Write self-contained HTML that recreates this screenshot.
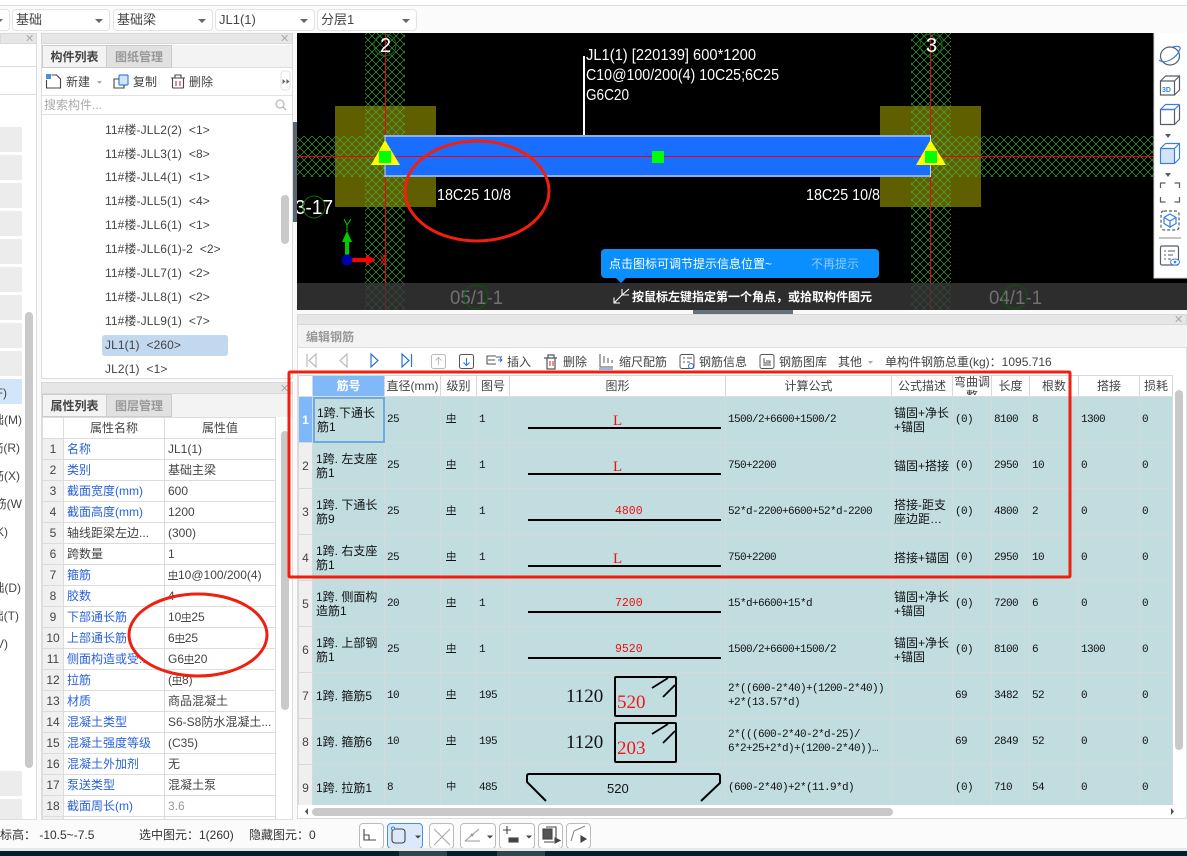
<!DOCTYPE html>
<html lang="zh"><head><meta charset="utf-8"><title>编辑钢筋</title>
<style>
*{box-sizing:border-box;margin:0;padding:0}
html,body{width:1187px;height:856px;overflow:hidden;background:#fafafa}
body{position:relative;font-family:"Liberation Sans","Noto Sans CJK SC",sans-serif;font-size:12px;color:#333}
.a{position:absolute;white-space:nowrap}
.sel{position:absolute;top:9px;height:22px;background:#fff;border:1px solid #e3e3e3;border-radius:4px;font-size:13px;line-height:20px;padding-left:3px;color:#444}
.sel:after{content:"";position:absolute;right:6px;top:9px;border:4px solid transparent;border-top:4px solid #666;border-bottom:0}
.hd{position:absolute;height:11px;background:#e6e6e6;border:1px solid #d8d8d8}
.x{position:absolute;font-size:11px;line-height:10px;color:#aaa}
.tab{position:absolute;height:23px;line-height:22px;text-align:center;font-size:12px;font-weight:bold;border:1px solid #ccc}
.tab.on{background:#f3f3f3;color:#444}.tab.off{background:#e1e1e1;color:#999}
.li{position:absolute;left:105px;line-height:16px;color:#444;font-size:12px;letter-spacing:.1px;white-space:pre}
.g{display:inline-block;border-bottom:1px solid currentColor;line-height:9px;font-size:10px;width:10px;text-align:center;font-family:"Noto Sans CJK SC",sans-serif}
.g2{border:0}
#pr{position:absolute;left:42px;top:417px;width:234px;height:402px;overflow:hidden}
#pr table{border-collapse:collapse;table-layout:fixed;width:234px}
#pr tr{height:21px}
#pr td{border:1px solid #dcdcdc;height:21px;padding:1px 3px 0;white-space:nowrap;overflow:hidden;font-size:12px;line-height:15px;color:#444;background:#fff}
#pr td:first-child{background:#f0f0f0;text-align:center;padding:1px 0 0}
#pr td.b{color:#2a62d8}
#rb{position:absolute;left:298px;top:375px;width:875px;height:430px;overflow:hidden}
#rb table{border-collapse:collapse;table-layout:fixed;width:874px}
#rb td{border:1px solid #d8d8d8;background:#c1dde0;height:46px;padding:0 2px;font-size:12px;line-height:14px;color:#111;overflow:hidden;vertical-align:middle}
#rb tr:first-child td{height:21px;background:#fff;text-align:center;color:#444;font-size:12px;border-bottom:1px solid #ddd}
#rb td.n{background:#efefef;text-align:center;padding:0;color:#444}
#rb td.m{font:11px/14px "Liberation Mono","Noto Sans CJK SC",monospace;letter-spacing:-.6px;padding-left:2px}
#rb td.t{padding-left:3px}
#rb .g{margin-left:3px}
.tl{position:absolute;top:354px;font-size:12px;line-height:16px;color:#444}
.side{position:absolute;left:0;width:22px;height:25px;background:#ececec}
.sd{position:absolute;font-size:12px;line-height:16px;white-space:nowrap;color:#444}
.st{position:absolute;top:827px;font-size:12px;line-height:16px;color:#333}
.bt{position:absolute;top:823px;height:26px;border:1px solid #bbb;border-radius:4px;background:#fff}
</style></head><body>

<div class="a" style="left:0;top:0;width:1187px;height:6px;background:#fff;border-bottom:1px solid #ddd"></div>
<div class="a" style="left:0;top:7px;width:1187px;height:26px;background:#fbfbfb"></div>
<div class="sel" style="left:-10px;width:20px"></div>
<div class="sel" style="left:12px;width:98px">基础</div>
<div class="sel" style="left:113px;width:100px">基础梁</div>
<div class="sel" style="left:215px;width:100px">JL1(1)</div>
<div class="sel" style="left:317px;width:100px">分层1</div>

<!-- left panel 1 -->
<div class="a" style="left:-2px;top:33px;width:39px;height:787px;background:#fff;border:1px solid #ddd"></div>
<div class="hd" style="left:0;top:33px;width:37px"></div><div class="x" style="left:25px;top:34px">✕</div>
<div class="a" style="left:0;top:66px;width:36px;height:1px;background:#ddd"></div>
<div class="a" style="left:0;top:94px;width:36px;height:1px;background:#ddd"></div>
<div class="side" style="top:127px"></div><div class="side" style="top:155px"></div><div class="side" style="top:183px"></div><div class="side" style="top:211px"></div><div class="side" style="top:239px"></div><div class="side" style="top:267px"></div><div class="side" style="top:295px"></div><div class="side" style="top:323px"></div><div class="side" style="top:351px"></div>
<div class="side" style="top:379px;background:#d3e5f8"></div>
<div class="side" style="top:771px"></div><div class="side" style="top:799px;height:20px"></div>
<div class="a" style="left:25px;top:312px;width:8px;height:456px;background:#c9c9c9;border-radius:4px"></div>
<div class="sd" style="right:1180px;top:385px">(F)</div>
<div class="sd" style="right:1165px;top:412px">础(M)</div>
<div class="sd" style="right:1167px;top:440px">筋(R)</div>
<div class="sd" style="right:1167px;top:468px">筋(X)</div>
<div class="sd" style="right:1165px;top:496px">筋(W</div>
<div class="sd" style="right:1179px;top:524px">(K)</div>
<div class="sd" style="right:1166px;top:580px">础(D)</div>
<div class="sd" style="right:1168px;top:608px">础(T)</div>
<div class="sd" style="right:1179px;top:636px">(V)</div>

<!-- component list -->
<div class="a" style="left:41px;top:33px;width:252px;height:346px;background:#fff;border:1px solid #ddd"></div>
<div class="hd" style="left:41px;top:33px;width:252px"></div><div class="x" style="left:280px;top:34px">✕</div>
<div class="a" style="left:42px;top:45px;width:250px;height:23px;background:#f3f3f3;border-bottom:1px solid #ddd"></div>
<div class="tab on" style="left:42px;top:45px;width:65px">构件列表</div>
<div class="tab off" style="left:106px;top:45px;width:66px">图纸管理</div>
<div class="a" style="left:42px;top:95px;width:250px;height:1px;background:#e2e2e2"></div>
<div class="a" style="left:42px;top:114px;width:250px;height:1px;background:#e2e2e2"></div>
<svg class="a" style="left:42px;top:70px" width="250" height="24" viewBox="42 70 250 24" fill="none">
<rect x="46" y="74" width="5" height="5" fill="#4d8de8"/>
<path d="M46.500 80v8h14V79l-4-4h-5" stroke="#444" stroke-width="1.100"/>
<rect x="119" y="75" width="9" height="10" rx="1" fill="#d3e4f9" stroke="#3a80df" stroke-width="1.200"/>
<path d="M119 79h-5v9h10v-3" stroke="#444" stroke-width="1.100"/>
<path d="M172.500 78v9a1 1 0 001 1h9a1 1 0 001-1v-9M171 78h14M175 78v-3h6v3" stroke="#444" stroke-width="1.100"/>
<path d="M176 81v5M180 81v5" stroke="#d22" stroke-width="1.100"/>
<path d="M97 81l5 0-2.500 3z" fill="#aaa"/>
<rect x="281" y="71" width="9" height="19" rx="3" fill="#fff" stroke="#e2e2e2"/>
<path d="M282.500 79l3 2.500-3 2.500zM286.500 79l3 2.500-3 2.500z" fill="#666"/>
</svg>
<div class="a" style="left:66px;top:74px;font-size:12px;line-height:16px;color:#444">新建</div>
<div class="a" style="left:133px;top:74px;font-size:12px;line-height:16px;color:#444">复制</div>
<div class="a" style="left:189px;top:74px;font-size:12px;line-height:16px;color:#444">删除</div>
<div class="a" style="left:44px;top:97px;font-size:12px;line-height:16px;color:#aaa">搜索构件...</div>
<svg class="a" style="left:274px;top:98px" width="14" height="14" fill="none" stroke="#bbb" stroke-width="1.300"><circle cx="6" cy="6" r="4"/><path d="M9 9l3 3"/></svg>
<div class="li" style="top:122px">11#楼-JLL2(2)  &lt;1&gt;</div>
<div class="li" style="top:146px">11#楼-JLL3(1)  &lt;8&gt;</div>
<div class="li" style="top:169px">11#楼-JLL4(1)  &lt;1&gt;</div>
<div class="li" style="top:193px">11#楼-JLL5(1)  &lt;4&gt;</div>
<div class="li" style="top:217px">11#楼-JLL6(1)  &lt;1&gt;</div>
<div class="li" style="top:241px">11#楼-JLL6(1)-2  &lt;2&gt;</div>
<div class="li" style="top:265px">11#楼-JLL7(1)  &lt;2&gt;</div>
<div class="li" style="top:289px">11#楼-JLL8(1)  &lt;2&gt;</div>
<div class="li" style="top:313px">11#楼-JLL9(1)  &lt;7&gt;</div>
<div class="a" style="left:102px;top:335px;width:126px;height:21px;background:#c2d8ef;border-radius:3px"></div>
<div class="li" style="top:337px">JL1(1)  &lt;260&gt;</div>
<div class="li" style="top:361px">JL2(1)  &lt;1&gt;</div>
<div class="a" style="left:281px;top:195px;width:8px;height:49px;background:#c9c9c9;border-radius:4px"></div>

<!-- property panel -->
<div class="a" style="left:41px;top:382px;width:252px;height:438px;background:#fff;border:1px solid #ddd"></div>
<div class="hd" style="left:41px;top:382px;width:252px;height:12px"></div><div class="x" style="left:280px;top:384px">✕</div>
<div class="a" style="left:42px;top:394px;width:250px;height:23px;background:#f3f3f3"></div>
<div class="tab on" style="left:42px;top:394px;width:65px">属性列表</div>
<div class="tab off" style="left:106px;top:394px;width:66px">图层管理</div>
<div id="pr"><table><colgroup><col style="width:21px"><col style="width:101px"><col style="width:111px"></colgroup>
<tr><td style="background:#fff"></td><td style="text-align:center">属性名称</td><td style="text-align:center">属性值</td></tr>
<tr><td>1</td><td class="b">名称</td><td>JL1(1)</td></tr>
<tr><td>2</td><td class="b">类别</td><td>基础主梁</td></tr>
<tr><td>3</td><td class="b">截面宽度(mm)</td><td>600</td></tr>
<tr><td>4</td><td class="b">截面高度(mm)</td><td>1200</td></tr>
<tr><td>5</td><td>轴线距梁左边...</td><td>(300)</td></tr>
<tr><td>6</td><td>跨数量</td><td>1</td></tr>
<tr><td>7</td><td class="b">箍筋</td><td><span class="g">中</span>10@100/200(4)</td></tr>
<tr><td>8</td><td class="b">胶数</td><td>4</td></tr>
<tr><td>9</td><td class="b">下部通长筋</td><td>10<span class="g">中</span>25</td></tr>
<tr><td>10</td><td class="b">上部通长筋</td><td>6<span class="g">中</span>25</td></tr>
<tr><td>11</td><td class="b">侧面构造或受...</td><td>G6<span class="g">中</span>20</td></tr>
<tr><td>12</td><td class="b">拉筋</td><td>(<span class="g">中</span>8)</td></tr>
<tr><td>13</td><td class="b">材质</td><td>商品混凝土</td></tr>
<tr><td>14</td><td class="b">混凝土类型</td><td>S6-S8防水混凝土...</td></tr>
<tr><td>15</td><td class="b">混凝土强度等级</td><td>(C35)</td></tr>
<tr><td>16</td><td class="b">混凝土外加剂</td><td>无</td></tr>
<tr><td>17</td><td class="b">泵送类型</td><td>混凝土泵</td></tr>
<tr><td>18</td><td class="b">截面周长(m)</td><td style="color:#999">3.6</td></tr>
<tr><td></td><td></td><td></td></tr>
</table></div>
<div class="a" style="left:281px;top:431px;width:8px;height:279px;background:#c9c9c9;border-radius:4px"></div>

<!-- canvas -->
<div class="a" style="left:293px;top:122px;width:4px;height:100px;background:#5c6670"></div>
<svg class="a" style="left:297px;top:33px;background:#000" width="890" height="277" viewBox="297 33 890 277" fill="none">
<defs><pattern id="h" patternUnits="userSpaceOnUse" width="8" height="8"><path d="M0 0L8 8M8 0L0 8" stroke="#48b848" stroke-width=".6"/></pattern></defs>
<rect x="335" y="106" width="101" height="101" fill="#5f5f00"/>
<rect x="880" y="106" width="101" height="101" fill="#5f5f00"/>
<rect x="297" y="136" width="857" height="41" fill="url(#h)"/>
<rect x="365" y="33" width="40" height="277" fill="url(#h)"/>
<rect x="911" y="33" width="40" height="277" fill="url(#h)"/>
<path d="M385.500 33V310M930.500 33V310M297 156.500H1154" stroke="#f00010" stroke-width="1"/>
<rect x="385" y="135" width="545" height="42" fill="#8ab0ef"/>
<rect x="385" y="137" width="545" height="38" fill="#1a6eff"/>
<path d="M385 156.500H930" stroke="#f00010"/>
<path d="M385 135V177M930.500 135V177" stroke="#c8d4e8"/>
<path d="M385 140L400 165H371ZM930.500 140L946 165H916Z" fill="#ff0"/>
<rect x="379" y="151" width="12" height="12" fill="#0f0"/>
<rect x="652" y="151" width="12" height="12" fill="#0f0"/>
<rect x="925" y="151" width="12" height="12" fill="#0f0"/>
<path d="M584 56V135" stroke="#fff" stroke-width="2"/>
<g fill="#fff" font-family="Liberation Sans,Noto Sans CJK SC,sans-serif" font-size="16">
<text x="586" y="60" textLength="170" lengthAdjust="spacingAndGlyphs">JL1(1) [220139] 600*1200</text>
<text x="586" y="80" textLength="193" lengthAdjust="spacingAndGlyphs">C10@100/200(4) 10C25;6C25</text>
<text x="586" y="100" textLength="43" lengthAdjust="spacingAndGlyphs">G6C20</text>
<text x="437" y="200" textLength="74" lengthAdjust="spacingAndGlyphs">18C25 10/8</text>
<text x="806" y="200" textLength="74" lengthAdjust="spacingAndGlyphs">18C25 10/8</text>
<text x="380" y="52" font-size="20">2</text>
<text x="926" y="52" font-size="20">3</text>
<text x="295" y="214" font-size="20" textLength="38" lengthAdjust="spacingAndGlyphs">3-17</text>
</g>
<g stroke="#0a6a0a"><circle cx="385" cy="45" r="11"/><circle cx="931" cy="45" r="11"/><circle cx="314" cy="207" r="11"/></g>
<path d="M347 258V236" stroke="#0c0" stroke-width="4"/><path d="M342 242L347 231L352 242Z" fill="#0c0"/>
<path d="M352 260H372" stroke="#f00" stroke-width="4"/><path d="M366 255L376 260L366 265Z" fill="#f00"/>
<circle cx="347" cy="260" r="5.500" fill="#0000a8"/>
<path d="M344 219L347 225L351 219M347 225V231" stroke="#0c0"/>
<path d="M380 255L387 265M387 255L380 265" stroke="#f00"/>
<rect x="297" y="283" width="890" height="27" fill="#373737" fill-opacity=".82"/>
<g fill="#707070" font-family="Liberation Sans,sans-serif" font-size="19"><text x="450" y="304" textLength="53" lengthAdjust="spacingAndGlyphs">05/1-1</text><text x="989" y="304" textLength="53" lengthAdjust="spacingAndGlyphs">04/1-1</text></g>
<g stroke="#0a5a0a"><circle cx="476" cy="297" r="12"/><circle cx="1015" cy="297" r="12"/></g>
<path d="M601 253a4 4 0 014-4H875a4 4 0 014 4V274a4 4 0 01-4 4H626l-5 5-5-5H605a4 4 0 01-4-4Z" fill="#0a8fff"/>
<path d="M614 303l8-8M614 297.500V303H620M629 289l-7 6M622 289V295H629" stroke="#fff" stroke-width="1.100"/>
<rect x="1154" y="33" width="33" height="245" fill="#fff"/>
<path d="M1154 33V278H1187" stroke="#d8d8d8"/>
<g stroke="#555e6a" stroke-width="1.200" stroke-linejoin="round">
<ellipse cx="1170" cy="56" rx="9.500" ry="9"/>
<path d="M1160.500 81h14v14h-14zM1160.500 81l5-5h14v14l-5 5M1174.500 81l5-5"/>
<path d="M1160.500 109.500h14v15h-14z"/>
<path d="M1174.500 124.500l5-5v-15"/>
<path d="M1160.500 148.500h14v15h-14z" fill="#d3e4f9" stroke="#3a80df"/>
<path d="M1160.500 148.500l5-5h14v15l-5 5M1174.500 148.500l5-5" stroke="#3a80df"/>
<path d="M1160.500 188v-5h5M1174.500 183h5v5M1179.500 197v5h-5M1165.500 202h-5v-5"/>
<rect x="1161" y="211" width="18" height="19" rx="3" stroke-dasharray="3 2"/>
<rect x="1160.500" y="246" width="18" height="19" rx="1.500"/>
<path d="M1164 251h2M1168 251h7M1164 255h2M1168 255h5M1164 259h2M1168 259h3" stroke-width="1"/>
</g>
<path d="M1160.500 109.500l5-5h14M1160.500 109.500h14l5-5" stroke="#3a80df" stroke-width="1.200"/>
<path d="M1159 60c6 5 18-2 21-11 1-3-3-3-7-2" stroke="#3a80df" stroke-width="1.200"/>
<path d="M1165 173h6l-3 4zM1165 134h6l-3 4z" fill="#555e6a"/>
<path d="M1170 214l6 3.500v6l-6 3.500-6-3.500v-6zM1164 217.500l6 3.500 6-3.500M1170 221v7" stroke="#3a80df" stroke-width="1.200"/>
<path d="M1159 238h22" stroke="#888"/>
<ellipse cx="1175" cy="262" rx="4.500" ry="3" fill="#fff" stroke="#3a80df"/><circle cx="1175" cy="262" r="1.300" fill="#3a80df"/>
<text x="1162" y="92" font-size="7" font-weight="bold" fill="#3a80df" font-family="Liberation Sans,sans-serif">3D</text>
</svg>
<div class="a" style="left:609px;top:256px;font-size:12px;line-height:16px;color:#fff">点击图标可调节提示信息位置~</div>
<div class="a" style="left:811px;top:256px;font-size:12px;line-height:16px;color:#8ccbff">不再提示</div>
<div class="a" style="left:632px;top:289px;font-size:12px;line-height:16px;font-weight:bold;color:#fff">按鼠标左键指定第一个角点&#65292;或拾取构件图元</div>
<div class="a" style="left:693px;top:310px;width:100px;height:4px;background:#667078"></div>

<!-- editor -->
<div class="a" style="left:297px;top:314px;width:890px;height:505px;background:#fff;border:1px solid #ddd"></div>
<div class="hd" style="left:297px;top:314px;width:890px;height:11px"></div><div class="x" style="left:1174px;top:315px">✕</div>
<div class="a" style="left:298px;top:325px;width:889px;height:23px;background:#f3f3f3;border-bottom:1px solid #ddd;padding:4px 0 0 8px;color:#999;font-size:12px;font-weight:bold;line-height:16px">编辑钢筋</div>
<svg class="a" style="left:298px;top:350px" width="800" height="25" viewBox="298 350 800 25" fill="none">
<path d="M307 354V367M316 354L309 360.500 316 367Z" stroke="#bbb" stroke-width="1.200"/>
<path d="M347 354L340 360.500 347 367Z" stroke="#bbb" stroke-width="1.200"/>
<path d="M371 354L378 360.500 371 367Z" stroke="#2f6fd8" stroke-width="1.200"/>
<path d="M402 354L409 360.500 402 367ZM411.500 354V367" stroke="#2f6fd8" stroke-width="1.200"/>
<rect x="431.500" y="354.500" width="14" height="14" rx="2" stroke="#bbb"/><path d="M438.500 365V358M435.500 360.500L438.500 357.500 441.500 360.500" stroke="#bbb"/>
<rect x="459.500" y="354.500" width="14" height="14" rx="2" stroke="#555"/><path d="M466.500 358V365M463.500 362.500L466.500 365.500 469.500 362.500" stroke="#2f6fd8"/>
<path d="M496 356h-9v8h9M488 360h7M496 357h6" stroke="#555" stroke-width="1.100"/><path d="M498 360h4m-2-2l2 2-2 2" stroke="#2f6fd8"/>
<path d="M544 358h13M547 358v11h8v-11M548 358v-3h6v3" stroke="#555" stroke-width="1.200"/><path d="M550 361v5M553 361v5" stroke="#d22"/>
<path d="M600 354v13h13M604 356v7M608 358v5M612 360v3" stroke="#555"/><path d="M599 369h14" stroke="#2f6fd8"/>
<rect x="680" y="354.500" width="14" height="14" rx="2" stroke="#555"/><path d="M683 358h2M687 358h5M683 362h2M687 362h3" stroke="#555"/><circle cx="691" cy="366" r="2.500" fill="#fff" stroke="#2f6fd8"/>
<rect x="760" y="354.500" width="14" height="14" rx="2" stroke="#555"/><path d="M763 365h8M764 358v5h6v-2h-4" stroke="#555"/>
<path d="M868 361l5 0-2.500 3z" fill="#aaa"/>
</svg>
<div class="tl" style="left:507px">插入</div><div class="tl" style="left:563px">删除</div><div class="tl" style="left:619px">缩尺配筋</div><div class="tl" style="left:699px">钢筋信息</div><div class="tl" style="left:779px">钢筋图库</div><div class="tl" style="left:838px">其他</div><div class="tl" style="left:885px">单构件钢筋总重(kg)&#65306;<span>1095.716</span></div>

<div id="rb"><table><colgroup><col style="width:14px"><col style="width:72px"><col style="width:56px"><col style="width:36px"><col style="width:33px"><col style="width:216px"><col style="width:166px"><col style="width:61px"><col style="width:39px"><col style="width:38px"><col style="width:49px"><col style="width:61px"><col style="width:33px"></colgroup>
<tr><td></td><td style="background:#80b8f8;color:#fff;font-weight:bold">筋号</td><td style="padding:0;white-space:nowrap">直径(mm)</td><td>级别</td><td>图号</td><td>图形</td><td>计算公式</td><td>公式描述</td><td style="padding:0;line-height:14px"><div style="height:20px;overflow:hidden;margin-top:-3px">弯曲调<br>整</div></td><td>长度</td><td>根数</td><td>搭接</td><td>损耗</td></tr>
<tr><td class="n" style="background:#7fb8f8;color:#fff;font-weight:bold">1</td><td style="background:#c1dde0;outline:2px solid #6ea8e8;outline-offset:-2px;padding-left:4px">1跨.下通长<br>筋1</td><td class="m">25</td><td class="m"><span class="g">中</span></td><td class="m">1</td><td></td><td class="m">1500/2+6600+1500/2</td><td>锚固+净长<br>+锚固</td><td class="m">(0)</td><td class="m">8100</td><td class="m">8</td><td class="m">1300</td><td class="m">0</td></tr>
<tr><td class="n">2</td><td class="t">1跨. 左支座<br>筋1</td><td class="m">25</td><td class="m"><span class="g">中</span></td><td class="m">1</td><td></td><td class="m">750+2200</td><td>锚固+搭接</td><td class="m">(0)</td><td class="m">2950</td><td class="m">10</td><td class="m">0</td><td class="m">0</td></tr>
<tr><td class="n">3</td><td class="t">1跨. 下通长<br>筋9</td><td class="m">25</td><td class="m"><span class="g">中</span></td><td class="m">1</td><td></td><td class="m">52*d-2200+6600+52*d-2200</td><td>搭接-距支<br>座边距…</td><td class="m">(0)</td><td class="m">4800</td><td class="m">2</td><td class="m">0</td><td class="m">0</td></tr>
<tr><td class="n">4</td><td class="t">1跨. 右支座<br>筋1</td><td class="m">25</td><td class="m"><span class="g">中</span></td><td class="m">1</td><td></td><td class="m">750+2200</td><td>搭接+锚固</td><td class="m">(0)</td><td class="m">2950</td><td class="m">10</td><td class="m">0</td><td class="m">0</td></tr>
<tr><td class="n">5</td><td class="t">1跨. 侧面构<br>造筋1</td><td class="m">20</td><td class="m"><span class="g">中</span></td><td class="m">1</td><td></td><td class="m">15*d+6600+15*d</td><td>锚固+净长<br>+锚固</td><td class="m">(0)</td><td class="m">7200</td><td class="m">6</td><td class="m">0</td><td class="m">0</td></tr>
<tr><td class="n">6</td><td class="t">1跨. 上部钢<br>筋1</td><td class="m">25</td><td class="m"><span class="g">中</span></td><td class="m">1</td><td></td><td class="m">1500/2+6600+1500/2</td><td>锚固+净长<br>+锚固</td><td class="m">(0)</td><td class="m">8100</td><td class="m">6</td><td class="m">1300</td><td class="m">0</td></tr>
<tr><td class="n">7</td><td class="t">1跨. 箍筋5</td><td class="m">10</td><td class="m"><span class="g">中</span></td><td class="m">195</td><td></td><td class="m">2*((600-2*40)+(1200-2*40))<br>+2*(13.57*d)</td><td></td><td class="m">69</td><td class="m">3482</td><td class="m">52</td><td class="m">0</td><td class="m">0</td></tr>
<tr><td class="n">8</td><td class="t">1跨. 箍筋6</td><td class="m">10</td><td class="m"><span class="g">中</span></td><td class="m">195</td><td></td><td class="m">2*(((600-2*40-2*d-25)/<br>6*2+25+2*d)+(1200-2*40))…</td><td></td><td class="m">69</td><td class="m">2849</td><td class="m">52</td><td class="m">0</td><td class="m">0</td></tr>
<tr><td class="n" style="height:46px">9</td><td class="t">1跨. 拉筋1</td><td class="m">8</td><td class="m"><span class="g g2">中</span></td><td class="m">485</td><td></td><td class="m">(600-2*40)+2*(11.9*d)</td><td></td><td class="m">(0)</td><td class="m">710</td><td class="m">54</td><td class="m">0</td><td class="m">0</td></tr>
</table></div>

<!-- shapes -->
<svg class="a" style="left:0;top:0" width="1187" height="856" viewBox="0 0 1187 856" fill="none">
<path d="M528 428H721M528 474H721M528 520H721M528 566H721M528 612H721M528 658H721" stroke="#000" stroke-width="2"/>
<g fill="#f01010" font-family="Liberation Serif,serif" font-size="15"><text x="613" y="425">L</text><text x="613" y="471">L</text><text x="613" y="563">L</text></g>
<g fill="#f01010" font-family="Liberation Mono,monospace" font-size="11.500"><text x="615" y="514">4800</text><text x="615" y="606">7200</text><text x="615" y="652">9520</text></g>
<g fill="#111" font-family="Liberation Serif,serif" font-size="19"><text x="566" y="702">1120</text><text x="566" y="748">1120</text></g>
<rect x="615" y="677" width="61" height="39" rx="1" stroke="#000" stroke-width="2"/><rect x="615" y="723" width="61" height="39" rx="1" stroke="#000" stroke-width="2"/>
<path d="M652 688L668 678M663 697L675 685M652 734L668 724M663 743L675 731" stroke="#000" stroke-width="1.800"/>
<g fill="#f01818" font-family="Liberation Serif,serif" font-size="19"><text x="617" y="708">520</text><text x="617" y="754">203</text></g>
<path d="M546 801L527 782V776Q527 774 529 774H718Q720 774 720 776V783L701 801" stroke="#000" stroke-width="2"/>
<text x="607" y="793" fill="#111" font-family="Liberation Sans,sans-serif" font-size="13">520</text>
<rect x="289" y="372" width="781" height="205" rx="1" stroke="#f02010" stroke-width="3"/>
<ellipse cx="477" cy="191" rx="72" ry="50" stroke="#f02010" stroke-width="3"/>
<ellipse cx="198" cy="635" rx="69" ry="41" stroke="#f02010" stroke-width="3"/>
</svg>

<!-- scrollbars -->
<div class="a" style="left:1175px;top:390px;width:8px;height:360px;background:#c9c9c9;border-radius:4px"></div>
<div class="a" style="left:298px;top:805px;width:888px;height:13px;background:#fff"></div>
<div class="a" style="left:312px;top:808px;width:581px;height:8px;background:#c9c9c9;border-radius:4px"></div>
<svg class="a" style="left:298px;top:805px" width="888" height="13"><path d="M7 6.500L10 3V10Z" fill="#555"/><path d="M873 3L876 6.500 873 10Z" fill="#555"/></svg>

<!-- status bar -->
<div class="a" style="left:0;top:820px;width:1187px;height:31px;background:#fbfbfb"></div>
<div class="st" style="left:0">标高&#65306;&nbsp;-10.5~-7.5</div>
<div class="st" style="left:139px">选中图元&#65306;1(260)</div>
<div class="st" style="left:249px">隐藏图元&#65306;0</div>
<div class="bt" style="left:359px;width:25px"></div>
<div class="bt" style="left:387px;width:36px;background:#dbe9fb;border-color:#4a90e0"></div>
<div class="bt" style="left:429px;width:25px"></div>
<div class="bt" style="left:460px;width:36px"></div>
<div class="bt" style="left:499px;width:36px"></div>
<div class="bt" style="left:538px;width:25px"></div>
<div class="bt" style="left:566px;width:25px"></div>
<svg class="a" style="left:355px;top:820px" width="240" height="31" viewBox="355 820 240 31" fill="none" stroke="#444" stroke-width="1.100">
<path d="M364 829V840H376M364 835H369V840"/>
<rect x="392" y="829" width="13" height="14" rx="3"/><circle cx="393" cy="828.500" r="1.500" stroke="#2f80e0" fill="#fff"/>
<path d="M415 835.500h6l-3 3z" fill="#444" stroke="none"/>
<path d="M434 829L450 845M450 829L434 845" stroke="#aaa"/>
<path d="M465 841H480M465 841L479 829" stroke="#999"/><circle cx="472" cy="835" r="1.500" fill="#999" stroke="none"/>
<path d="M487 835.500h6l-3 3zM526 835.500h6l-3 3z" fill="#444" stroke="none"/>
<path d="M503 830h8M507 826v8"/><rect x="509" y="838" width="9" height="4" fill="#444"/>
<rect x="543" y="829" width="9" height="10" fill="#555"/><path d="M546 827h10v11M544 842h10"/><path d="M555 838l5 2.500-5 2.500z" fill="#444"/>
<path d="M571 841L574 831 585 826" stroke="#888"/><path d="M581 836l5 3-5 3z" fill="#444"/>
</svg>
<div class="a" style="left:0;top:848px;width:1187px;height:3px;background:#e8e8e8"></div>
<div class="a" style="left:0;top:851px;width:1187px;height:5px;background:#00202e"></div>
<div class="a" style="left:399px;top:851px;width:48px;height:5px;background:#2c4652"></div>
<div class="a" style="left:497px;top:851px;width:48px;height:5px;background:#2c4652"></div>
</body></html>
